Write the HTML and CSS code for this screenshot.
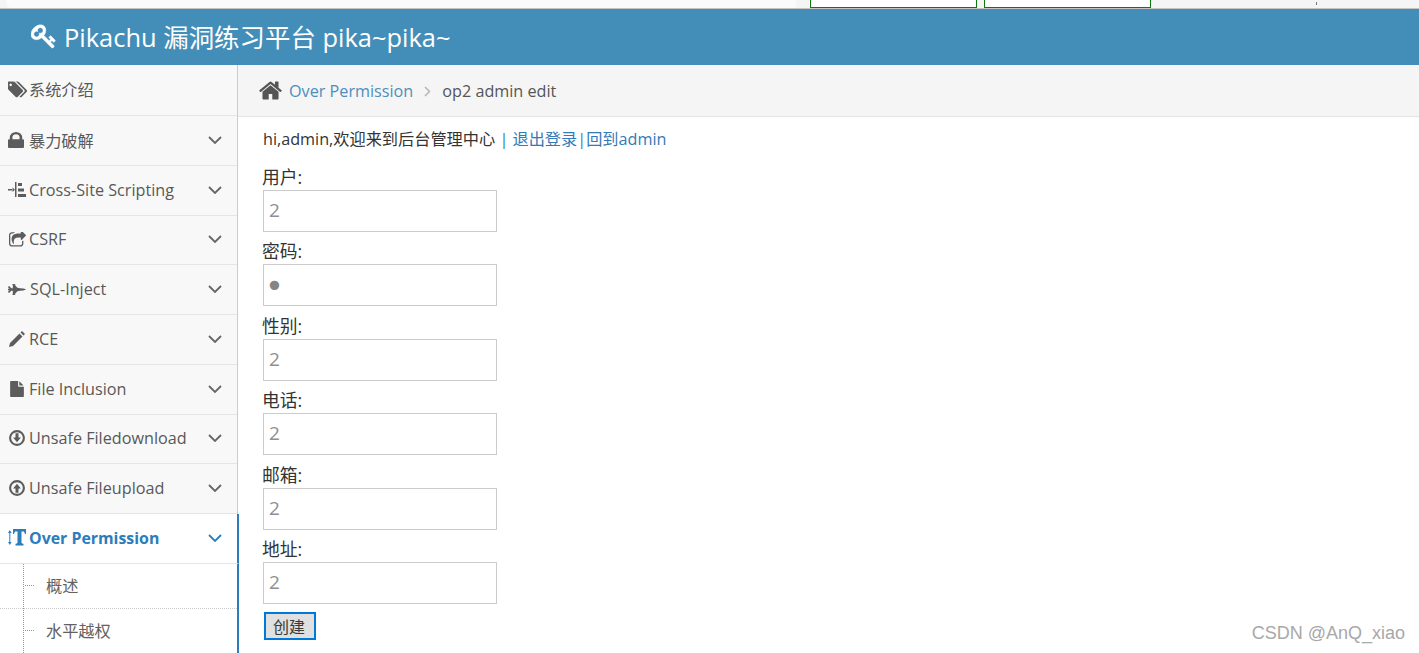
FILE: index.html
```html
<!DOCTYPE html>
<html lang="zh">
<head>
<meta charset="utf-8">
<title>Pikachu</title>
<link rel="stylesheet" href="styles.css">
</head>
<body>
<div class="strip">
  <div class="strip-tab"></div>
  <div class="strip-box strip-box-first"></div>
  <div class="strip-box strip-box-second"></div>
  <div class="strip-tick"></div>
</div>
<header class="topbar">
  <svg class="key-icon" viewBox="0 0 1792 1792"><path d="M832 512q0-80-56-136t-136-56-136 56-56 136q0 42 19 83-41-19-83-19-80 0-136 56t-56 136 56 136 136 56 136-56 56-136q0-42-19-83 41 19 83 19 80 0 136-56t56-136zm851 704q0 17-49 66t-66 49q-9 0-28.500-16t-36.500-33-38.500-40-24.500-26l-96 96 220 220q28 28 28 68 0 42-39 81t-81 39q-40 0-68-28l-671-671q-176 131-365 131-163 0-265.500-102.500t-102.500-265.500q0-160 95-313t248-248 313-95q163 0 265.500 102.500t102.500 265.500q0 189-131 365l355 355 96-96q-3-3-26-24.500t-40-38.500-33-36.500-16-28.500q0-17 49-66t66-49q13 0 23 10 6 6 46 44.500t82 79.500 86.500 86 73 78 28.500 41z"/></svg>
  <span class="brand">Pikachu 漏洞练习平台 pika~pika~</span>
</header>
<div class="layout">
  <nav class="sidebar">
    <a class="nav-item nav-first">
      <span class="nav-icon"><svg class="ico-tags" viewBox="0 0 1920 1792"><path d="M384 448q0-53-37.500-90.500t-90.500-37.500-90.500 37.500-37.500 90.500 37.500 90.500 90.500 37.500 90.500-37.500 37.500-90.500zm1067 576q0 53-37 90l-491 492q-39 37-91 37-53 0-90-37l-715-716q-38-37-64.500-101t-26.500-117v-416q0-52 38-90t90-38h416q53 0 117 26.500t102 64.500l715 714q37 39 37 91zm384 0q0 53-37 90l-491 492q-39 37-91 37-36 0-59-14t-53-45l470-470q37-37 37-90 0-52-37-91l-715-714q-38-38-102-64.500t-117-26.500h224q53 0 117 26.500t102 64.500l715 714q37 39 37 91z"/></svg></span>
      <span>系统介绍</span>
    </a>
    <a class="nav-item">
      <span class="nav-icon"><svg class="ico-lock" viewBox="320 128 1152 1408" preserveAspectRatio="none"><path d="M640 768h512v-192q0-106-75-181t-181-75-181 75-75 181v192zm832 96v576q0 40-28 68t-68 28h-960q-40 0-68-28t-28-68v-576q0-40 28-68t68-28h32v-192q0-184 132-316t316-132 316 132 132 316v192h32q40 0 68 28t28 68z"/></svg></span>
      <span>暴力破解</span>
      <svg class="chevron" viewBox="0 0 14 8"><path d="M1 1l6 6 6-6"/></svg>
    </a>
    <a class="nav-item">
      <span class="nav-icon"><svg class="ico-tree" viewBox="0 0 18 15"><path d="M0 7h4v1.400H0zM7 0h1.500v15H7zM10 1h4v3h-4zM10 6.500h6v3h-6zM10 12h8v3h-8zM4.500 5.500L7 7.700 4.500 9.900z"/></svg></span>
      <span>Cross-Site Scripting</span>
      <svg class="chevron" viewBox="0 0 14 8"><path d="M1 1l6 6 6-6"/></svg>
    </a>
    <a class="nav-item">
      <span class="nav-icon"><svg class="ico-share" viewBox="64 128 1664 1440"><path d="M1472 989v259q0 119-84.500 203.500t-203.500 84.500h-832q-119 0-203.500-84.500t-84.500-203.500v-832q0-119 84.500-203.500t203.500-84.500h255q13 0 22.500 9.500t9.500 22.500q0 27-26 32-77 26-133 60-10 4-16 4h-112q-66 0-113 47t-47 113v832q0 66 47 113t113 47h832q66 0 113-47t47-113v-214q0-19 18-29 28-13 54-37 16-16 35-8 21 9 21 29zm237-496l-384 384q-18 19-45 19-12 0-25-5-39-17-39-59v-192h-160q-323 0-438 131-119 137-74 473 3 23-20 34-8 2-12 2-16 0-26-13-10-14-21-31t-39.500-68.500-49.500-99.500-38.500-114-17.500-122q0-49 3.500-91t14-90 28-88 47-81.500 68.500-74 94.500-61.500 124.500-48.500 159.500-30.500 196.500-11h160v-192q0-42 39-59 13-5 25-5 26 0 45 19l384 384q19 19 19 45t-19 45z"/></svg></span>
      <span>CSRF</span>
      <svg class="chevron" viewBox="0 0 14 8"><path d="M1 1l6 6 6-6"/></svg>
    </a>
    <a class="nav-item">
      <span class="nav-icon"><svg class="ico-jet" viewBox="0 0 1920 1792"><path d="M1920 896q-1 32-288 96l-352 32-224 64h-64l-293 352h69q26 0 45 4.500t19 11.500-19 11.500-45 4.500h-320v-32h64v-416h-160l-192 224h-96l-32-32v-192h32v-32h128v-8l-192-24v-128l192-24v-8h-128v-32h-32v-192l32-32h96l192 224h160v-416h-64v-32h320q26 0 45 4.500t19 11.500-19 11.500-45 4.500h-69l293 352h64l224 64 352 32q261 58 287 93z"/></svg></span>
      <span class="nudge">SQL-Inject</span>
      <svg class="chevron" viewBox="0 0 14 8"><path d="M1 1l6 6 6-6"/></svg>
    </a>
    <a class="nav-item">
      <span class="nav-icon"><svg class="ico-pencil" viewBox="0 0 16 16"><path d="M0 16l1-4 9.500-9.500 3 3L4 15zM11.500 1.500L13 0l3 3-1.500 1.500z"/></svg></span>
      <span>RCE</span>
      <svg class="chevron" viewBox="0 0 14 8"><path d="M1 1l6 6 6-6"/></svg>
    </a>
    <a class="nav-item">
      <span class="nav-icon"><svg class="ico-file" viewBox="0 0 1536 1792"><path d="M1024 512v-472q22 14 36 28l408 408q14 14 28 36h-472zm-128 32q0 40 28 68t68 28h544v1056q0 40-28 68t-68 28h-1344q-40 0-68-28t-28-68v-1600q0-40 28-68t68-28h800v544z"/></svg></span>
      <span>File Inclusion</span>
      <svg class="chevron" viewBox="0 0 14 8"><path d="M1 1l6 6 6-6"/></svg>
    </a>
    <a class="nav-item">
      <span class="nav-icon"><svg class="ico-circle" viewBox="0 0 16 16"><circle class="ring" cx="8" cy="8" r="6.900"/><path d="M6.500 3.300h3v4.200h2.400L8 12.300 4.100 7.500h2.400z"/></svg></span>
      <span>Unsafe Filedownload</span>
      <svg class="chevron" viewBox="0 0 14 8"><path d="M1 1l6 6 6-6"/></svg>
    </a>
    <a class="nav-item">
      <span class="nav-icon"><svg class="ico-circle" viewBox="0 0 16 16"><circle class="ring" cx="8" cy="8" r="6.900"/><path d="M8 3.700l3.900 4.800H9.500v4.200h-3V8.500H4.100z"/></svg></span>
      <span>Unsafe Fileupload</span>
      <svg class="chevron" viewBox="0 0 14 8"><path d="M1 1l6 6 6-6"/></svg>
    </a>
    <a class="nav-item nav-active">
      <span class="nav-icon"><svg class="ico-text" viewBox="0 0 18 17"><path d="M1.300 4H0l1.800-3 1.800 3H2.300v9h1.300l-1.800 3L0 13h1.300zM5 0h13v5h-1l-1-2.500h-2.500V14l2 1v1.500H7.500V15l2-1V2.500H7L6 5H5z"/></svg></span>
      <span class="active-label">Over Permission</span>
      <svg class="chevron" viewBox="0 0 14 8"><path d="M1 1l6 6 6-6"/></svg>
    </a>
    <ul class="submenu">
      <li class="sub-item"><span class="sub-tick"></span>概述</li>
      <li class="sub-item"><span class="sub-tick"></span>水平越权</li>
    </ul>
  </nav>
  <main class="main">
    <div class="crumbs">
      <svg class="ico-home" viewBox="0 0 1792 1792"><path d="M1472 992v480q0 26-19 45t-45 19h-384v-384h-256v384h-384q-26 0-45-19t-19-45v-480q0-1 .5-3t.5-3l575-474 575 474q1 2 1 6zm223-69l-62 74q-8 9-21 11h-3q-13 0-21-7l-692-577-692 577q-12 8-24 7-13-2-21-11l-62-74q-8-10-7-23.500t11-21.500l719-599q32-26 76-26t76 26l244 204v-195q0-14 9-23t23-9h192q14 0 23 9t9 23v408l219 182q10 8 11 21.500t-7 23.500z"/></svg>
      <a class="crumb-link">Over Permission</a>
      <svg class="crumb-sep" viewBox="0 0 7 11"><path d="M1 1l4.500 4.500L1 10"/></svg>
      <span class="crumb-current">op2 admin edit</span>
    </div>
    <div class="content">
      <p class="greeting">hi,admin,欢迎来到后台管理中心 <span class="link">| 退出登录</span><span class="link">|回到admin</span></p>
      <form class="form">
        <label class="field"><span class="field-label">用户:</span><input class="field-input" placeholder="2"></label>
        <label class="field"><span class="field-label">密码:</span><input class="field-input field-secret" type="password" value="2"></label>
        <label class="field"><span class="field-label">性别:</span><input class="field-input" placeholder="2"></label>
        <label class="field"><span class="field-label">电话:</span><input class="field-input" placeholder="2"></label>
        <label class="field"><span class="field-label">邮箱:</span><input class="field-input" placeholder="2"></label>
        <label class="field"><span class="field-label">地址:</span><input class="field-input" placeholder="2"></label>
        <button class="submit" type="button">创建</button>
      </form>
    </div>
  </main>
</div>
<div class="watermark">CSDN @AnQ_xiao</div>
</body>
</html>
```
FILE: styles.css
```css
* { box-sizing: border-box; }

html, body {
  margin: 0;
  height: 100%;
  overflow: hidden;
}

body {
  position: relative;
  background: #fff;
  color: #333;
  font-family: "Open Sans", "Noto Sans CJK SC", sans-serif;
  font-size: 16.200px;
}

.strip {
  display: flex;
  height: 9px;
  background: #f5f5f5;
  border-bottom: 1px solid #c4c4c4;
}

.strip-tab {
  flex: none;
  width: 790px;
  margin-left: 6px;
  background: #fbfbfb;
  border-bottom-left-radius: 6px;
}

.strip-box {
  flex: none;
  width: 167px;
  height: 8px;
  background: #fff;
  border: 1px solid #0c7a0c;
  border-top: 0;
}

.strip-box-first { margin-left: 14px; }
.strip-box-second { margin-left: 7px; }

.strip-tick {
  flex: none;
  width: 1px;
  height: 3px;
  margin: 2px 0 0 165px;
  background: #777;
}

.topbar {
  display: flex;
  align-items: center;
  height: 56px;
  padding: 0 0 2px 31px;
  background: #438eb9;
  color: #fff;
}

.key-icon {
  flex: none;
  width: 26px;
  height: 26px;
  fill: #fff;
  stroke: #fff;
  stroke-width: 30;
}

.brand {
  margin: 0 0 2px 7px;
  font-size: 25.450px;
  white-space: nowrap;
}

.layout {
  display: flex;
  height: 588px;
}

.sidebar {
  flex: none;
  width: 238px;
  padding-top: 1.400px;
  background: #f8f8f8;
  border-right: 1px solid #ccc;
}

.nav-item {
  display: flex;
  align-items: center;
  height: 49.750px;
  padding: 0 15px 1.500px 8px;
  color: #585858;
  background: #f8f8f8;
  border-bottom: 1px solid #e5e5e5;
  white-space: nowrap;
}

.nav-first { padding-bottom: 3px; }

.nav-icon {
  flex: none;
  display: flex;
  align-items: center;
  width: 21px;
  height: 20px;
}

.nav-icon svg { fill: #5c5c5c; }

.ico-tags { width: 20px; height: 19px; }
.ico-lock { width: 16px; height: 16px; }
.ico-tree { width: 18px; height: 15px; }
.ico-share { width: 17px; height: 15px; margin-left: 1px; }
.ico-jet { width: 18px; height: 17px; }
.ico-pencil { width: 16px; height: 16px; margin-left: 1px; }
.ico-file { width: 14px; height: 16px; margin-left: 2px; }
.ico-circle { width: 16px; height: 16px; margin-left: 1px; }
.ico-text { width: 18px; height: 17px; }

.nav-icon .ring {
  fill: none;
  stroke: #5c5c5c;
  stroke-width: 2.100;
}

.nudge { margin-left: 1px; }

.chevron {
  flex: none;
  width: 14px;
  height: 8px;
  margin-left: auto;
  fill: none;
  stroke: #666;
  stroke-width: 1.800;
}

.nav-active {
  margin-right: -2px;
  background: #fff;
  color: #2b7dbc;
  border-right: 2px solid #2b7dbc;
}

.active-label {
  font-size: 15.900px;
  font-weight: 700;
}

.nav-active .nav-icon svg { fill: #2b7dbc; }
.nav-active .chevron { stroke: #2b7dbc; }

.submenu {
  position: relative;
  margin: 0 -2px 0 0;
  padding: 0;
  list-style: none;
  background: #fff;
  border-right: 2px solid #2b7dbc;
}

.submenu::before {
  content: "";
  position: absolute;
  top: 0;
  bottom: 0;
  left: 23px;
  border-left: 1px dotted #7a9cb8;
}

.sub-item {
  position: relative;
  display: flex;
  align-items: center;
  height: 45px;
  padding: 0 0 2px 46px;
  color: #616161;
  border-bottom: 1px dotted #ccc;
}

.sub-item:last-child { height: 46px; }

.sub-tick {
  position: absolute;
  top: 21px;
  left: 25px;
  width: 9px;
  border-top: 1px dotted #7a9cb8;
}

.main {
  flex: 1;
  min-width: 0;
}

.crumbs {
  display: flex;
  align-items: center;
  height: 52px;
  padding-left: 20px;
  background: #f5f5f5;
  border-bottom: 1px solid #e5e5e5;
  white-space: nowrap;
}

.ico-home {
  flex: none;
  width: 25px;
  height: 25px;
  fill: #555;
}

.crumb-link {
  margin-left: 6px;
  color: #4c8fbd;
}

.crumb-sep {
  flex: none;
  width: 7px;
  height: 11px;
  margin: 1px 0 0 11px;
  fill: none;
  stroke: #b2b6bf;
  stroke-width: 1.500;
}

.crumb-current {
  margin-left: 11px;
  color: #555;
}

.content {
  padding: 11px 0 0 25px;
}

.greeting {
  margin: 0;
  height: 22px;
  line-height: 22px;
  white-space: nowrap;
}

.link { color: #337ab7; }

.form { margin-top: 7px; }

.field { display: block; }

.field-label {
  display: block;
  height: 32.500px;
  margin-left: -1px;
  padding-top: 7.500px;
  font-size: 17.800px;
  line-height: 24px;
}

.field-input {
  display: block;
  width: 234px;
  height: 42px;
  padding: 0 5px 2px;
  border: 1px solid #ccc;
  background: #fff;
  color: #858585;
  font-family: "Open Sans", sans-serif;
  font-size: 19px;
}

.field-secret {
  padding: 2px 0 0 1px;
  font-family: "DejaVu Sans", sans-serif;
  font-size: 32px;
}

.field-input::placeholder {
  color: #8f8f8f;
  opacity: 1;
}

.submit {
  display: block;
  width: 52px;
  height: 28px;
  margin: 8px 0 0 1px;
  padding: 0 2px 0 0;
  background: #e0e0e0;
  border: 2px solid #0078d7;
  color: #393939;
  font-family: "Open Sans", "Noto Sans CJK SC", sans-serif;
  font-size: 16px;
}

.watermark {
  position: absolute;
  right: 14px;
  bottom: 8px;
  color: #a8a8a8;
  font-family: "Liberation Sans", sans-serif;
  font-size: 18px;
  line-height: 24px;
  white-space: nowrap;
}
```
